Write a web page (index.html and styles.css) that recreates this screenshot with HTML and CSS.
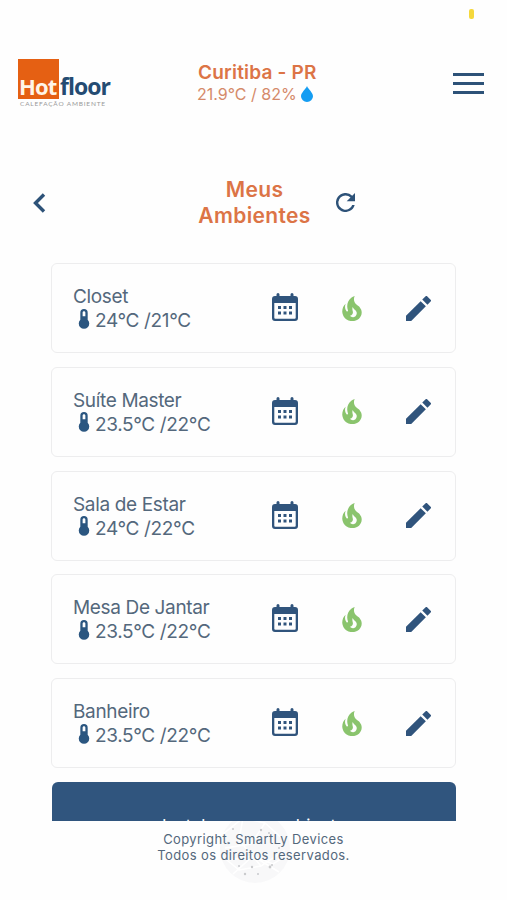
FILE: index.html
```html
<!DOCTYPE html>
<html lang="pt-BR">
<head>
<meta charset="utf-8">
<title>Meus Ambientes</title>
<link rel="stylesheet" href="styles.css">
</head>
<body>
<svg class="symbols" aria-hidden="true">
  <symbol id="thermo" viewBox="0 0 10 19"><path fill-rule="evenodd" d="M1.500 3.500a3.500 3.500 0 0 1 7 0v6.700a5 5 0 1 1-7 0zM5 2.200c-.8 0-1.300.5-1.300 1.400V7h2.600V3.600C6.300 2.700 5.800 2.200 5 2.200z"/></symbol>
  <symbol id="calendar" viewBox="0 0 26 28"><path fill-rule="evenodd" d="M4.500 1.500a1.500 1.500 0 0 1 3 0v1.500h11V1.500a1.500 1.500 0 0 1 3 0V3H23a3 3 0 0 1 3 3v19a3 3 0 0 1-3 3H3a3 3 0 0 1-3-3V6a3 3 0 0 1 3-3h1.500zM2.300 10v14.800q0 1 1 1h19.400q1 0 1-1V10zM6 13h3v3H6zm5.500 0h3v3h-3zm5.500 0h3v3h-3zM6 18.500h3v3H6zm5.500 0h3v3h-3zm5.500 0h3v3h-3z"/></symbol>
  <symbol id="flame" viewBox="4.900 3 14.200 18"><path d="M17.660 11.200c-.23-.3-.51-.56-.77-.82-.67-.6-1.430-1.030-2.070-1.660C13.330 7.260 13 4.850 13.950 3c-.95.230-1.780.75-2.490 1.320-2.590 2.080-3.610 5.750-2.390 8.900.04.1.08.2.08.330 0 .22-.15.420-.35.5-.23.1-.47.040-.66-.12a.58.58 0 0 1-.14-.17c-1.130-1.430-1.310-3.480-.55-5.120C5.780 10 4.870 12.300 5 14.470c.06.5.12 1 .29 1.500.14.6.41 1.200.71 1.730 1.080 1.730 2.950 2.970 4.960 3.220 2.140.27 4.430-.12 6.070-1.600 1.830-1.660 2.470-4.320 1.530-6.600l-.13-.26c-.21-.46-.77-1.260-.77-1.260m-3.160 6.300c-.28.240-.74.500-1.100.600-1.120.400-2.240-.16-2.900-.82 1.190-.28 1.900-1.160 2.110-2.050.17-.8-.15-1.460-.28-2.230-.12-.74-.1-1.370.17-2.060.19.380.39.760.63 1.060.77 1 1.980 1.440 2.240 2.800.04.140.060.280.060.430.030.820-.33 1.720-.93 2.270z"/></symbol>
  <symbol id="pencil" viewBox="3 3 18 18"><path d="M3 17.250V21h3.750L17.300 10.450 13.550 6.700zM20.710 7.040a1 1 0 0 0 0-1.410l-2.340-2.340a1 1 0 0 0-1.410 0L14.700 5.550l3.750 3.750z"/></symbol>
</svg>
<div class="screen">
  <div class="status"><i class="status-dot"></i></div>
  <header class="header">
    <div class="logo">
      <div class="logo-words"><span class="logo-hot">Hot</span><span class="logo-floor">floor</span></div>
      <div class="logo-tag">CALEFAÇÃO AMBIENTE</div>
    </div>
    <div class="weather">
      <div class="city">Curitiba - PR</div>
      <div class="reading">21.9°C / 82% <svg class="drop" viewBox="0 0 12 16"><path d="M6 0C5 3 0 6.500 0 10.200a6 5.800 0 0 0 12 0C12 6.500 7 3 6 0z"/></svg></div>
    </div>
    <div class="menu"><i></i><i></i><i></i></div>
  </header>
  <div class="titlebar">
    <svg class="back" viewBox="0 0 13 20"><path d="M11 1.500 2.500 10l8.500 8.500"/></svg>
    <h1>Meus<br>Ambientes</h1>
    <svg class="refresh" viewBox="4 4 16 16"><path d="M17.650 6.350A8 8 0 1 0 19.730 14h-2.080A6 6 0 1 1 12 6c1.660 0 3.140.69 4.220 1.780L13 11h7V4z"/></svg>
  </div>
  <main class="list">
    <section class="card"><div class="room"><div>Closet</div><div class="temp"><svg><use href="#thermo"/></svg>24°C /21°C</div></div><svg class="calendar"><use href="#calendar"/></svg><svg class="flame"><use href="#flame"/></svg><svg class="pencil"><use href="#pencil"/></svg></section>
    <section class="card"><div class="room"><div>Suíte Master</div><div class="temp"><svg><use href="#thermo"/></svg>23.5°C /22°C</div></div><svg class="calendar"><use href="#calendar"/></svg><svg class="flame"><use href="#flame"/></svg><svg class="pencil"><use href="#pencil"/></svg></section>
    <section class="card"><div class="room"><div>Sala de Estar</div><div class="temp"><svg><use href="#thermo"/></svg>24°C /22°C</div></div><svg class="calendar"><use href="#calendar"/></svg><svg class="flame"><use href="#flame"/></svg><svg class="pencil"><use href="#pencil"/></svg></section>
    <section class="card"><div class="room"><div>Mesa De Jantar</div><div class="temp"><svg><use href="#thermo"/></svg>23.5°C /22°C</div></div><svg class="calendar"><use href="#calendar"/></svg><svg class="flame"><use href="#flame"/></svg><svg class="pencil"><use href="#pencil"/></svg></section>
    <section class="card"><div class="room"><div>Banheiro</div><div class="temp"><svg><use href="#thermo"/></svg>23.5°C /22°C</div></div><svg class="calendar"><use href="#calendar"/></svg><svg class="flame"><use href="#flame"/></svg><svg class="pencil"><use href="#pencil"/></svg></section>
    <div class="install">Instalar novo ambiente</div>
  </main>
  <footer class="footer">
    <svg class="globe" viewBox="0 0 72 72"><circle class="disc" cx="36" cy="36" r="35"/><path class="mesh" d="M4 22 24 6l22 5 20 18M3 44l17 14 22-4 24-16M14 62l20-18 26 16M24 6l-4 22 22 26M46 11 32 32 6 36M10 48l24-4 20 8 13-8"/><g class="nodes"><circle cx="42" cy="18" r="1.200"/><circle cx="14" cy="17" r="1"/><circle cx="20" cy="54" r="1"/><circle cx="33" cy="55" r="1.200"/><circle cx="51" cy="55" r="1.400"/><circle cx="53" cy="53" r="1"/><circle cx="26" cy="62" r="1.200"/><circle cx="39" cy="62" r="1"/><circle cx="50" cy="21" r="1"/><circle cx="9" cy="31" r="1.200"/><circle cx="60" cy="36" r="1"/></g></svg>
    <p>Copyright. SmartLy Devices</p>
    <p>Todos os direitos reservados.</p>
  </footer>
</div>
</body>
</html>
```
FILE: styles.css
```css
* { box-sizing: border-box; }
body { margin: 0; background: #fefefe; font-family: Inter, "Liberation Sans", sans-serif; }
.symbols { position: absolute; width: 0; height: 0; }
.screen { width: 507px; height: 900px; overflow: hidden; display: flex; flex-direction: column; }
.status { height: 58px; flex: none; padding: 9px 0 0 469px; }
.status-dot { display: block; width: 5px; height: 10px; border-radius: 2px; background: #f5d83c; }
.header { height: 122px; flex: none; display: grid; grid-template-columns: 179px 1fr 54px; align-items: start; padding-left: 18px; }
.logo { padding-top: 1px; }
.logo-words { display: flex; height: 40px; font: 700 23px/26px "Open Sans", sans-serif; }
.logo-hot { width: 41px; height: 40px; padding: 14px 0 0 1px; background: #e56013; color: #fff5e8; font-size: 22px; letter-spacing: -.8px; }
.logo-floor { padding: 14px 0 0 1px; color: #244b72; letter-spacing: -1px; }
.logo-tag { margin: 1px 0 0 2px; font: 6.500px/7px Lato, sans-serif; letter-spacing: .8px; color: #999; white-space: nowrap; }
.weather { color: #dc7446; white-space: nowrap; padding-top: 3px; }
.city { font-size: 19px; line-height: 23px; font-weight: 600; letter-spacing: .2px; padding-left: 1px; }
.reading { display: flex; align-items: center; font-size: 16px; line-height: 21px; color: #d58a6a; }
.drop { width: 12px; height: 16px; margin: -1px 0 0 4px; fill: #159df2; }
.menu { width: 31px; padding-top: 15px; display: grid; gap: 6px; }
.menu i { height: 3px; background: #2d5278; }
.titlebar { height: 83px; flex: none; display: grid; grid-template-columns: 165px 113px 1fr; padding-left: 33px; align-items: start; }
.back { width: 13px; height: 20px; margin-top: 13px; fill: none; stroke: #2d5278; stroke-width: 3.400; }
h1 { margin: -3px 0 0; font-size: 21px; line-height: 26px; font-weight: 600; letter-spacing: .35px; color: #dc7446; text-align: center; white-space: nowrap; }
.refresh { width: 19px; height: 19px; margin: 13px 0 0 25px; fill: #2d5278; }
.list { height: 558px; flex: none; overflow: hidden; padding: 0 51px; display: flex; flex-direction: column; gap: 13.800px; }
.card { height: 90px; flex: none; border: 1px solid #ededee; border-radius: 6px; padding-left: 21px; display: grid; grid-template-columns: 199px 70px 64px 1fr; align-items: center; color: #54687c; }
.room { font-size: 19px; line-height: 24px; letter-spacing: -.35px; white-space: nowrap; padding-top: 2px; }
.temp { display: flex; align-items: center; }
.temp svg { width: 12px; height: 20px; margin: -5px 5px 0 5px; fill: #2b5680; }
.calendar { width: 26px; height: 28px; margin-top: -2px; fill: #30547c; }
.flame { width: 20px; height: 25px; fill: #8ac46d; }
.pencil { width: 25px; height: 25px; fill: #30547c; }
.install { height: 91px; flex: none; margin-left: 1px; border-radius: 6px; background: #30557e; color: #fff; font-size: 17px; line-height: 24px; letter-spacing: .1px; padding-top: 32px; text-align: center; }
.footer { height: 79px; flex: none; position: relative; padding-top: 10px; text-align: center; font-size: 13px; line-height: 16px; letter-spacing: .38px; color: #54687c; }
.footer p { margin: 0; position: relative; }
.globe { position: absolute; left: 219px; top: -9px; width: 72px; height: 72px; clip-path: inset(9px 0 0 0); }
.disc { fill: #f8f8f9; }
.mesh { fill: none; stroke: #fff; stroke-width: 1.500; }
.nodes { fill: #c9cacc; }
```
